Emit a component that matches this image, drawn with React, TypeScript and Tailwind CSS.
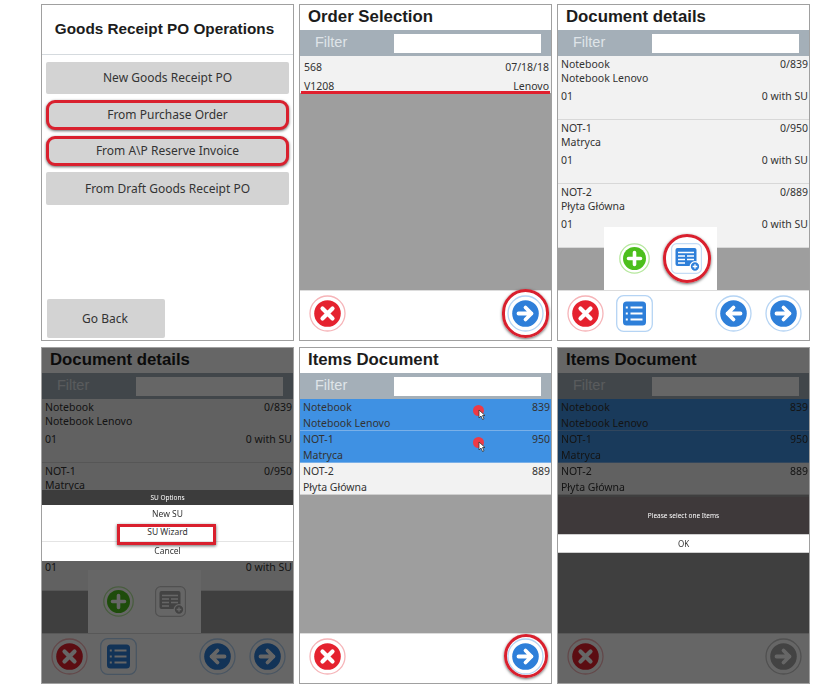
import type { ReactNode } from "react";

const textFont = "font-['Noto_Sans','Liberation_Sans',sans-serif]";
const titleFont = "font-['Liberation_Sans',Arial,sans-serif]";

function RoundButton({ fill, ring, children }: { fill: string; ring: string; children: ReactNode }) {
  return (
    <svg width="37" height="37" viewBox="0 0 37 37" className="shrink-0">
      <circle cx="18.5" cy="18.5" r="17.5" fill="white" stroke={ring} strokeWidth="1.3" />
      <circle cx="18.5" cy="18.5" r="13.3" fill={fill} />
      {children}
    </svg>
  );
}

function CancelButton() {
  return (
    <RoundButton fill="#e5222f" ring="#f6b4b8">
      <path d="M13.5 13.5l10 10M23.5 13.5l-10 10" stroke="white" strokeWidth="4.2" strokeLinecap="round" />
    </RoundButton>
  );
}

function ArrowButton({ back = false, fill = "#2e7fd9", ring = "#b5d4f4" }: { back?: boolean; fill?: string; ring?: string }) {
  return (
    <RoundButton fill={fill} ring={ring}>
      <g transform={back ? "rotate(180 18.5 18.5)" : undefined}>
        <path d="M11.5 18.5h13M18.5 12.5l6 6-6 6" fill="none" stroke="white" strokeWidth="3.8" strokeLinecap="round" strokeLinejoin="round" />
      </g>
    </RoundButton>
  );
}

function ListButton() {
  return (
    <svg width="37" height="37" viewBox="0 0 37 37" className="shrink-0">
      <rect x="0.7" y="0.7" width="35.6" height="35.6" rx="7" fill="white" stroke="#b5d4f4" strokeWidth="1.3" />
      <rect x="7" y="6.5" width="23" height="24" rx="3.5" fill="#2e7fd9" />
      <path d="M14.5 12.5h12M14.5 18.5h12M14.5 24.5h12" stroke="white" strokeWidth="2.2" />
      <path d="M9.8 12.5h2M9.8 18.5h2M9.8 24.5h2" stroke="white" strokeWidth="2.2" />
    </svg>
  );
}

function PlusButton() {
  return (
    <svg width="31" height="31" viewBox="0 0 31 31">
      <circle cx="15.5" cy="15.5" r="14.7" fill="white" stroke="#b6e89e" strokeWidth="1.3" />
      <circle cx="15.5" cy="15.5" r="11.5" fill="#4cbf1c" />
      <path d="M15.5 9.5v12M9.5 15.5h12" stroke="white" strokeWidth="3.6" strokeLinecap="round" />
    </svg>
  );
}

function DocAddIcon({ color = "#2e7fd9", ring = "#c4dcf6" }: { color?: string; ring?: string }) {
  return (
    <svg width="31" height="31" viewBox="0 0 31 31">
      <rect x="0.6" y="0.6" width="29.8" height="29.8" rx="5" fill="white" stroke={ring} strokeWidth="1.2" />
      <rect x="4.5" y="5" width="21" height="18" rx="2" fill={color} />
      <path d="M7 9.5h16M7 13h7M16 13h7M7 16.5h7M16 16.5h7M7 20h7" stroke="white" strokeWidth="1.5" />
      <circle cx="24" cy="23.5" r="4.8" fill={color} stroke="white" strokeWidth="1.3" />
      <path d="M24 21.2v4.6M21.7 23.5h4.6" stroke="white" strokeWidth="1.3" />
    </svg>
  );
}

function RedRing({ className }: { className: string }) {
  return (
    <div className={`absolute rounded-full border-[3px] border-[#d9202e] shadow-[0_1px_3px_rgba(0,0,0,0.6)] ${className}`} />
  );
}

function Header({ title }: { title: string }) {
  return (
    <div className="flex h-[25px] shrink-0 items-center bg-white pb-[2px] pl-2">
      <h2 className={`${titleFont} text-[16.8px] font-bold text-[#1c1c1c]`}>{title}</h2>
    </div>
  );
}

function FilterBar() {
  return (
    <div className="flex h-[26px] shrink-0 items-center bg-[#a4afb8] pl-[15px]">
      <span className={`${titleFont} w-[79px] text-[14.5px] text-[#dfe4e8]`}>Filter</span>
      <div className="h-[19px] w-[147px] bg-white" />
    </div>
  );
}

function DetailRow({ code, name, count }: { code: string; name: string; count: string }) {
  return (
    <div className="h-[64px] border-b border-[#d8d8d8] bg-[#f2f2f2] pl-[3px] pr-[1px] pt-[1px] text-[10.5px] leading-[14px] text-[#333]">
      <div className="flex justify-between">
        <span>{code}</span>
        <span>{count}</span>
      </div>
      <div>{name}</div>
      <div className="mt-[4px] flex justify-between">
        <span>01</span>
        <span>0 with SU</span>
      </div>
    </div>
  );
}

function Cursor() {
  return (
    <div className="absolute left-[173px] top-[6px] h-[11px] w-[11px] rounded-full bg-[#ee3a46]">
      <svg width="9" height="12" viewBox="0 0 9 12" className="absolute left-[5px] top-[4px]">
        <path d="M1 1v8l2-2 1.5 3.5 1.5-.7L4.5 6.5H7z" fill="white" stroke="#333" strokeWidth="0.8" />
      </svg>
    </div>
  );
}

function ItemRow({ code, name, count, selected = false, pointer = false }: { code: string; name: string; count: string; selected?: boolean; pointer?: boolean }) {
  return (
    <div className={`relative h-[32px] border-b pl-[3px] pr-[1px] text-[10.5px] leading-[16px] text-[#333] ${selected ? "border-[#7ab0e8] bg-[#3f91e3]" : "border-[#cfcfcf] bg-[#f2f2f2]"}`}>
      <div className="flex justify-between">
        <span>{code}</span>
        <span>{count}</span>
      </div>
      <div>{name}</div>
      {pointer && <Cursor />}
    </div>
  );
}

function DocumentList() {
  return (
    <div className={`flex-1 bg-[#9e9e9e] ${textFont}`}>
      <DetailRow code="Notebook" name="Notebook Lenovo" count="0/839" />
      <DetailRow code="NOT-1" name="Matryca" count="0/950" />
      <DetailRow code="NOT-2" name="Płyta Główna" count="0/889" />
    </div>
  );
}

function ItemsList({ pointers = false }: { pointers?: boolean }) {
  return (
    <div className={`flex-1 bg-[#9e9e9e] ${textFont}`}>
      <ItemRow code="Notebook" name="Notebook Lenovo" count="839" selected pointer={pointers} />
      <ItemRow code="NOT-1" name="Matryca" count="950" selected pointer={pointers} />
      <ItemRow code="NOT-2" name="Płyta Główna" count="889" />
    </div>
  );
}

function Footer({ children }: { children: ReactNode }) {
  return (
    <div className="flex h-[50px] shrink-0 items-center border-t border-[#dcdcdc] bg-white pb-[4px] pl-[9px] pr-[7px]">
      {children}
    </div>
  );
}

function DocumentFooter() {
  return (
    <Footer>
      <div className="flex gap-3">
        <CancelButton />
        <ListButton />
      </div>
      <div className="ml-auto flex gap-[13px]">
        <ArrowButton back />
        <ArrowButton />
      </div>
    </Footer>
  );
}

function Panel({ children }: { children: ReactNode }) {
  return <section className="relative flex h-[337px] flex-col overflow-hidden border border-[#a0a0a0] bg-white">{children}</section>;
}

function MenuButton({ label, marked = false, className = "h-[33px]" }: { label: string; marked?: boolean; className?: string }) {
  return (
    <button className={`flex w-full items-center justify-center bg-[#d3d3d3] text-[12px] text-[#333] ${marked ? "h-[30px] rounded-[9px] border-[3px] border-[#d9202e] shadow-[0_1px_3px_rgba(0,0,0,0.6)]" : `rounded-[2px] ${className}`}`}>
      {label}
    </button>
  );
}

function OperationsPanel() {
  return (
    <Panel>
      <div className="flex h-[50px] shrink-0 items-center justify-center border-b border-[#d5dade] pr-[6px]">
        <h2 className={`${titleFont} text-[15.3px] font-bold text-[#1c1c1c]`}>Goods Receipt PO Operations</h2>
      </div>
      <div className={`flex flex-1 flex-col px-[4px] pt-[7px] pb-[2px] ${textFont}`}>
        <div className="flex flex-col gap-[6px]">
          <MenuButton label="New Goods Receipt PO" className="h-[32px]" />
          <MenuButton label="From Purchase Order" marked />
          <MenuButton label="From A\P Reserve Invoice" marked />
          <MenuButton label="From Draft Goods Receipt PO" />
        </div>
        <button className="ml-[1px] mt-auto h-[39px] w-[118px] rounded-[2px] bg-[#d3d3d3] pr-[2px] text-[12px] text-[#333]">Go Back</button>
      </div>
    </Panel>
  );
}

function OrderPanel() {
  return (
    <Panel>
      <Header title="Order Selection" />
      <FilterBar />
      <div className={`flex-1 bg-[#9e9e9e] ${textFont}`}>
        <div className="h-[37px] bg-[#f2f2f2] pl-[4px] pr-[2px] pt-[2px] text-[10.5px] leading-[19px] text-[#333]">
          <div className="flex justify-between">
            <span>568</span>
            <span>07/18/18</span>
          </div>
          <div className="flex justify-between">
            <span>V1208</span>
            <span>Lenovo</span>
          </div>
        </div>
        <div className="mx-[1px] -mt-[2px] h-[3px] bg-[#e01f2d]" />
      </div>
      <Footer>
        <CancelButton />
        <div className="ml-auto">
          <ArrowButton />
        </div>
      </Footer>
      <RedRing className="right-[2px] bottom-[2px] h-[49px] w-[47px]" />
    </Panel>
  );
}

function AddPopup({ dim = false }: { dim?: boolean }) {
  return (
    <div className="absolute bottom-[50px] left-[46px] flex h-[63px] w-[113px] items-center gap-[21px] bg-white pl-[15px] pb-[1px]">
      <PlusButton />
      {dim ? <DocAddIcon color="#a8a8a8" ring="#c8c8c8" /> : <DocAddIcon />}
    </div>
  );
}

function DetailsPanel() {
  return (
    <Panel>
      <Header title="Document details" />
      <FilterBar />
      <DocumentList />
      <DocumentFooter />
      <AddPopup />
      <div className="absolute left-[105px] top-[229px] h-[49px] w-[48px] rounded-full border-[3px] border-[#d9202e] shadow-[0_1px_3px_rgba(0,0,0,0.6)]" />
    </Panel>
  );
}

function SuDialogPanel() {
  return (
    <Panel>
      <Header title="Document details" />
      <FilterBar />
      <DocumentList />
      <DocumentFooter />
      <AddPopup dim />
      <div className="absolute inset-0 bg-black/60" />
      <div className={`absolute inset-x-0 top-[142px] text-center text-[8.5px] ${textFont}`}>
        <div className="flex h-[15px] items-center justify-center bg-[#3c3c3c] text-[6.5px] text-white">SU Options</div>
        <div className="flex h-[19px] items-center justify-center bg-white text-[#333]">New SU</div>
        <div className="relative flex h-[18px] items-center justify-center border-b border-[#e4e4e4] bg-white text-[#333]">
          SU Wizard
          <div className="absolute left-[75px] top-0 h-[21px] w-[99px] border-[3px] border-[#d9202e] shadow-[0_1px_3px_rgba(0,0,0,0.6)]" />
        </div>
        <div className="flex h-[19px] items-center justify-center bg-white text-[#333]">Cancel</div>
      </div>
    </Panel>
  );
}

function ItemsPanel() {
  return (
    <Panel>
      <Header title="Items Document" />
      <FilterBar />
      <ItemsList pointers />
      <Footer>
        <CancelButton />
        <div className="ml-auto">
          <ArrowButton />
        </div>
      </Footer>
      <RedRing className="right-[3px] bottom-[5px] h-[44px] w-[44px]" />
    </Panel>
  );
}

function ItemsAlertPanel() {
  return (
    <Panel>
      <Header title="Items Document" />
      <FilterBar />
      <ItemsList />
      <Footer>
        <CancelButton />
        <div className="ml-auto">
          <ArrowButton fill="#a8a8a8" ring="#c8c8c8" />
        </div>
      </Footer>
      <div className="absolute inset-0 bg-black/60" />
      <div className={`absolute inset-x-0 top-[149px] text-center ${textFont}`}>
        <div className="flex h-[37px] items-center justify-center bg-[#3e393a] text-[6.5px] text-white">Please select one Items</div>
        <div className="flex h-[19px] items-center justify-center border-y border-[#cfcfcf] bg-white text-[8px] text-[#333]">OK</div>
      </div>
    </Panel>
  );
}

export default function App() {
  return (
    <div className="h-[686px] w-[837px] overflow-hidden bg-white">
      <div className="ml-[41px] grid w-[769px] grid-cols-3 gap-x-[5px] gap-y-[6px] pt-[4px] blur-[0.5px]">
        <OperationsPanel />
        <OrderPanel />
        <DetailsPanel />
        <SuDialogPanel />
        <ItemsPanel />
        <ItemsAlertPanel />
      </div>
    </div>
  );
}
